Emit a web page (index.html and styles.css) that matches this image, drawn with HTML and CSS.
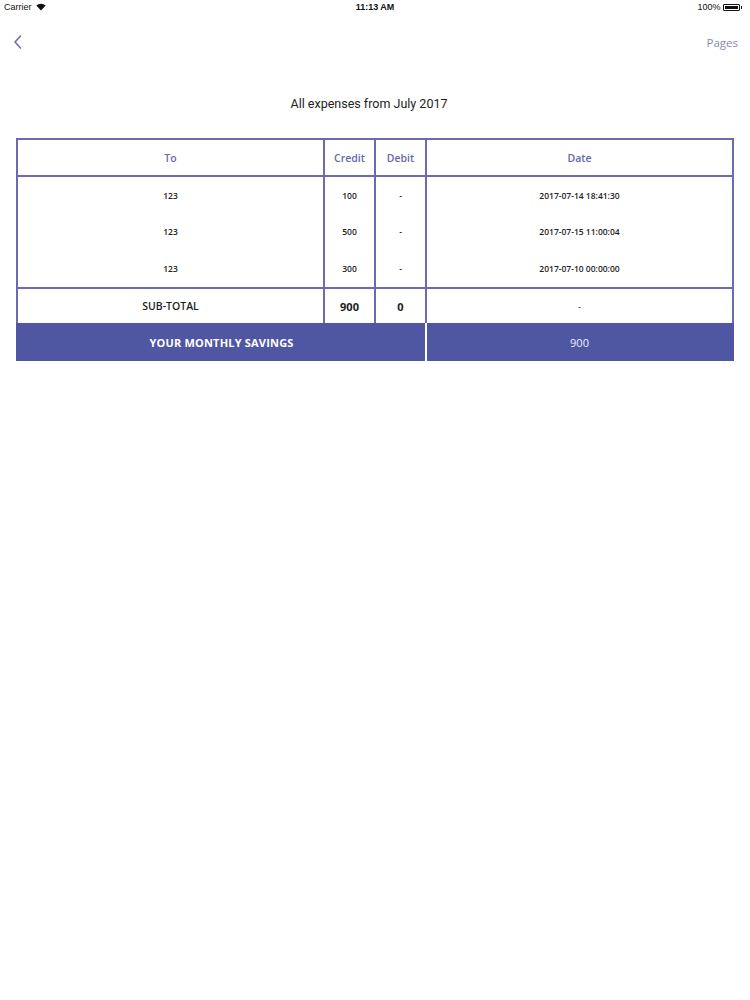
FILE: index.html
```html
<!DOCTYPE html>
<html>
<head>
<meta charset="utf-8">
<link rel="stylesheet" href="styles.css">
</head>
<body>
<div class="status">
  <div class="carrier">Carrier
    <svg class="wifi" width="10" height="8" viewBox="0 0 10 8"><path d="M5 7.5 L0.3 2.6 A6.8 6.8 0 0 1 9.7 2.6 Z" fill="#111"/></svg>
  </div>
  <div class="time">11:13 AM</div>
  <div class="battery">100%
    <span class="batt"><span class="batt-fill"></span></span><span class="batt-tip"></span>
  </div>
</div>
<div class="nav">
  <svg class="back" width="10" height="16" viewBox="0 0 10 16"><path d="M7.5 2 L2 8 L7.5 14" fill="none" stroke="#6f6fa8" stroke-width="1.6" stroke-linecap="round" stroke-linejoin="round"/></svg>
  <div class="pages">Pages</div>
</div>
<h1 class="title">All expenses from July 2017</h1>
<table class="tbl">
  <colgroup><col class="c-to"><col class="c-num"><col class="c-num"><col class="c-date"></colgroup>
  <thead>
    <tr class="head"><th>To</th><th>Credit</th><th>Debit</th><th>Date</th></tr>
  </thead>
  <tbody>
    <tr class="row first"><td>123</td><td>100</td><td>-</td><td>2017-07-14 18:41:30</td></tr>
    <tr class="row"><td>123</td><td>500</td><td>-</td><td>2017-07-15 11:00:04</td></tr>
    <tr class="row last"><td>123</td><td>300</td><td>-</td><td>2017-07-10 00:00:00</td></tr>
    <tr class="sub"><td class="sub-label">SUB-TOTAL</td><td>900</td><td>0</td><td class="sub-dash">-</td></tr>
    <tr class="save"><td colspan="3" class="save-label">YOUR MONTHLY SAVINGS</td><td class="save-val">900</td></tr>
  </tbody>
</table>
</body>
</html>
```
FILE: styles.css
```css
html, body { margin: 0; padding: 0; background: #fff; }
body { width: 750px; font-family: "Open Sans", "Liberation Sans", sans-serif; }
.status { height: 14px; display: flex; align-items: center; justify-content: space-between; padding: 0 8px 0 4px; font-family: "Liberation Sans", Arial, sans-serif; font-size: 9px; color: #111; position: relative; }
.carrier { display: flex; align-items: center; gap: 4px; }
.time { position: absolute; left: 0; right: 0; text-align: center; font-weight: bold; font-size: 9px; }
.battery { display: flex; align-items: center; gap: 1px; position: relative; z-index: 1; }
.batt { width: 17px; height: 7px; margin-left: 1px; border: 1px solid #111; border-radius: 1px; box-sizing: border-box; padding: 1px; display: inline-flex; }
.batt-fill { flex: 1; background: #111; }
.batt-tip { width: 1.5px; height: 3px; background: #111; }
.nav { height: 28px; margin-top: 14px; display: flex; align-items: center; justify-content: space-between; padding: 0 12px 0 12px; }
.back { margin-left: 1px; }
.pages { font-size: 11.5px; color: #8a8ab6; }
.title { margin: 40px 0 0; padding-right: 12px; font-family: Roboto, "Liberation Sans", sans-serif; font-weight: 400; font-size: 12.5px; color: #222; text-align: center; height: 16px; line-height: 16px; }
.tbl { margin: 26px 0 0 16px; width: 716px; border-collapse: collapse; table-layout: fixed; }
.c-to { width: 307px; }
.c-num { width: 51px; }
.c-date { width: 307px; }
.tbl th, .tbl td { border-left: 2px solid #6b6bae; border-right: 2px solid #6b6bae; text-align: center; padding: 0; }
.head th { height: 35px; border-top: 2px solid #6b6bae; border-bottom: 2px solid #6b6bae; font-size: 10.5px; font-weight: 600; color: #6767a8; }
.row td { height: 37px; font-size: 8.5px; font-weight: 600; color: #222; }
.row.first td { height: 36px; }
.row.last td { height: 37px; }
.sub td { height: 34px; border-top: 2px solid #6b6bae; font-size: 11px; font-weight: 700; color: #1e1e1e; }
.sub td.sub-label { font-weight: 600; font-size: 10.5px; }
.sub td.sub-dash { font-weight: 600; font-size: 9px; color: #555; }
.save td { height: 38px; background: #4f56a2; border-color: #4f56a2; color: #fff; }
.tbl .save td.save-label { font-size: 11px; font-weight: 700; letter-spacing: 0.2px; border-right: 2px solid #fff; }
.tbl .save td.save-val { border-left: 2px solid #fff; font-size: 11px; font-weight: 500; color: #eef; }
```
